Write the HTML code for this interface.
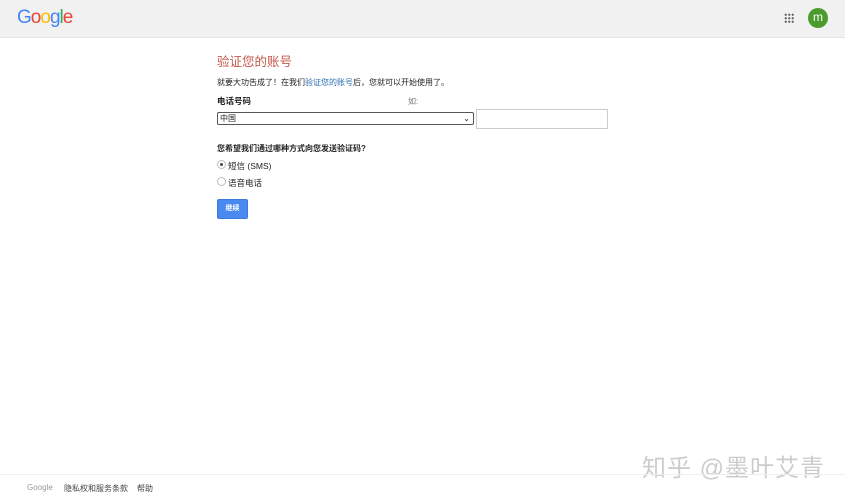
<!DOCTYPE html>
<html><head><meta charset="utf-8"><style>
body{margin:0;width:845px;height:498px;background:#fff;font-family:"Liberation Sans","Noto Sans CJK SC",sans-serif;position:relative;overflow:hidden;color:#222}
.hdr{position:absolute;left:0;top:0;width:845px;height:37px;background:#f1f1f1;border-bottom:1px solid #e5e5e5}
.logo{position:absolute;left:17px;top:7px;font-size:19px;letter-spacing:-1px}
.a{position:absolute}
.grid{position:absolute;left:784px;top:13px;width:10px;height:10px;background:
radial-gradient(circle,#666 1px,transparent 1.2px) 0 0/3.5px 3.5px}
.av{position:absolute;left:808px;top:8px;width:20px;height:20px;border-radius:50%;background:#4b9b2e;color:#fff;font-size:12px;text-align:center;line-height:19px}
.t{font-size:8.5px}
</style></head><body>
<div class="hdr">
<div class="logo"><span style="color:#4285f4">G</span><span style="color:#ea4335">o</span><span style="color:#fbbc05">o</span><span style="color:#4285f4">g</span><span style="color:#34a853">l</span><span style="color:#ea4335">e</span></div>
<div class="grid"></div><div class="av">m</div>
</div>
<div class="a" style="left:217px;top:51px;font-size:12.5px;color:#c5574a">验证您的账号</div>
<div class="a t" style="left:217px;top:77px;font-size:8px">就要大功告成了！在我们<span style="color:#2a6bb5">验证您的账号</span>后，您就可以开始使用了。</div>
<div class="a t" style="left:217px;top:95px;font-weight:bold">电话号码</div>
<div class="a" style="left:408px;top:96px;font-size:8px;color:#777">如:</div>
<div class="a" style="left:217px;top:112px;width:253px;height:11px;border:1px solid #555;border-radius:2px;font-size:8px;line-height:11px;padding-left:2px;box-sizing:content-box">中国<span style="position:absolute;right:3px;top:0;font-size:8px">⌄</span></div>
<div class="a" style="left:476px;top:109px;width:130px;height:18px;border:1px solid #ccc"></div>
<div class="a t" style="left:217px;top:143px;font-weight:bold;font-size:8px">您希望我们通过哪种方式向您发送验证码?</div>
<div class="a" style="left:217px;top:160px;width:7px;height:7px;border:1px solid #bbb;border-radius:50%"><div style="margin:2px;width:3px;height:3px;border-radius:50%;background:#444"></div></div>
<div class="a t" style="left:228px;top:160px">短信 (SMS)</div>
<div class="a" style="left:217px;top:177px;width:7px;height:7px;border:1px solid #bbb;border-radius:50%"></div>
<div class="a t" style="left:228px;top:177px">语音电话</div>
<div class="a" style="left:217px;top:199px;width:29px;height:18px;background:#4a8af0;border:1px solid #3b78e0;border-radius:2px;color:#fff;font-size:7px;text-align:center;line-height:18px;font-weight:bold">继续</div>
<div class="a" style="left:642px;top:448px;font-size:24px;color:#ccc;letter-spacing:1px">知乎 @墨叶艾青</div>
<div class="a" style="left:0;top:474px;width:845px;border-top:1px solid #eee"></div>
<div class="a" style="left:27px;top:483px;font-size:8px;color:#999">Google</div>
<div class="a" style="left:64px;top:483px;font-size:8px;color:#444">隐私权和服务条款</div>
<div class="a" style="left:137px;top:483px;font-size:8px;color:#444">帮助</div>
</body></html>
